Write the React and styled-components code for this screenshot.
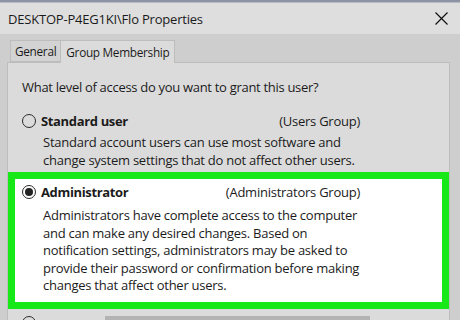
import React from 'react'
import styled, { createGlobalStyle } from 'styled-components'

const GlobalStyle = createGlobalStyle`
    html, body {
        margin: 0;
        padding: 0;
        background: #cecece;
    }
    body {
        font-family: "Open Sans", "Noto Sans", sans-serif;
        color: #1b1b1b;
    }
`

const Window = styled.div`
    width: 460px;
    height: 320px;
    overflow: hidden;
    background: #cecece;
    display: flex;
    flex-direction: column;
`

const BackStrip = styled.div`
    height: 3px;
    background: #8e92a3;
    border-bottom: 1px solid #b9bcc6;
    box-sizing: border-box;
    flex: none;
`

const TitleBar = styled.div`
    height: 31px;
    flex: none;
    display: flex;
    align-items: center;
    justify-content: space-between;
    padding: 0 12px 0 8px;
    background: #dedede;
    font-size: 13px;
    letter-spacing: -0.2px;
`

const CloseButton = styled.svg`
    width: 13px;
    height: 13px;
    margin-bottom: 1px;
`

const TabStrip = styled.div`
    height: 28px;
    flex: none;
    display: flex;
    align-items: flex-end;
    padding-left: 10px;
    box-sizing: border-box;
`

const Tab = styled.div`
    height: ${({ active }) => (active ? '22px' : '20px')};
    padding: 0 ${({ active }) => (active ? '5px' : '4px')};
    margin-bottom: ${({ active }) => (active ? '-1px' : '0')};
    display: flex;
    align-items: center;
    font-size: 11.8px;
    letter-spacing: -0.3px;
    background: ${({ active }) => (active ? '#dbdbdb' : '#d3d3d3')};
    border: 1px solid #bdbdbd;
    border-bottom: ${({ active }) => (active ? 'none' : '1px solid #bdbdbd')};
    border-left: ${({ active }) => (active ? 'none' : '1px solid #bdbdbd')};
    position: relative;
    z-index: ${({ active }) => (active ? 1 : 0)};
`

const Panel = styled.div`
    flex: 1;
    margin: 0 10px 0 7px;
    background: #dbdbdb;
    border: 1px solid #bdbdbd;
    border-bottom: none;
    padding-top: 14px;
`

const Question = styled.div`
    font-size: 13px;
    line-height: 20px;
    letter-spacing: -0.3px;
    padding-left: 14px;
    margin-bottom: 14px;
`

const Option = styled.div`
    padding: ${({ highlight }) => (highlight ? '3px 0 7px 7px' : '0 0 0 14px')};
    border: ${({ highlight }) => (highlight ? '7px solid #17e817' : 'none')};
    background: ${({ highlight }) => (highlight ? '#ffffff' : 'transparent')};
    margin-bottom: 3px;
`

const OptionHead = styled.div`
    display: flex;
    align-items: center;
    width: 338px;
    height: 20px;
    font-size: 13px;
    letter-spacing: -0.25px;
`

const Radio = styled.span`
    width: 14px;
    height: 14px;
    box-sizing: border-box;
    border-radius: 50%;
    border: 1px solid #2a2a2a;
    display: inline-flex;
    align-items: center;
    justify-content: center;
    margin-right: 5px;
    flex: none;
    &::after {
        content: '';
        width: 8px;
        height: 8px;
        border-radius: 50%;
        background: #222;
        display: ${({ checked }) => (checked ? 'block' : 'none')};
    }
`

const Label = styled.span`
    font-weight: 700;
    letter-spacing: -0.35px;
`

const Group = styled.span`
    margin-left: auto;
`

const Description = styled.p`
    margin: ${({ tight }) => (tight ? '5px' : '3px')} 0 0 21px;
    font-size: 13px;
    letter-spacing: -0.25px;
    line-height: 17.5px;
`

const MoreRow = styled.div`
    display: flex;
    align-items: flex-start;
    padding: 4px 0 0 14px;
`

const GreyField = styled.div`
    width: 265px;
    height: 24px;
    margin-left: 64px;
    background: #b3b3b3;
`

const options = [
    {
        label: 'Standard user',
        group: '(Users Group)',
        lines: [
            'Standard account users can use most software and',
            'change system settings that do not affect other users.'
        ]
    },
    {
        label: 'Administrator',
        group: '(Administrators Group)',
        checked: true,
        lines: [
            'Administrators have complete access to the computer',
            'and can make any desired changes. Based on',
            'notification settings, administrators may be asked to',
            'provide their password or confirmation before making',
            'changes that affect other users.'
        ]
    }
]

const App = () => {
    return (
        <Window>
            <GlobalStyle />
            <BackStrip />
            <TitleBar>
                <span>DESKTOP-P4EG1KI\Flo Properties</span>
                <CloseButton viewBox='0 0 13 13'>
                    <path d='M0.5 0.5 L12.5 12.5 M12.5 0.5 L0.5 12.5' stroke='#111' strokeWidth='1.2' fill='none' />
                </CloseButton>
            </TitleBar>
            <TabStrip>
                <Tab>General</Tab>
                <Tab active>Group Membership</Tab>
            </TabStrip>
            <Panel>
                <Question>What level of access do you want to grant this user?</Question>
                {options.map((item) => (
                    <Option key={item.label} highlight={item.checked}>
                        <OptionHead>
                            <Radio checked={item.checked} />
                            <Label>{item.label}</Label>
                            <Group>{item.group}</Group>
                        </OptionHead>
                        <Description tight={item.checked}>
                            {item.lines.map((line) => (
                                <React.Fragment key={line}>
                                    {line}
                                    <br />
                                </React.Fragment>
                            ))}
                        </Description>
                    </Option>
                ))}
                <MoreRow>
                    <Radio />
                    <GreyField />
                </MoreRow>
            </Panel>
        </Window>
    )
}

export default App
